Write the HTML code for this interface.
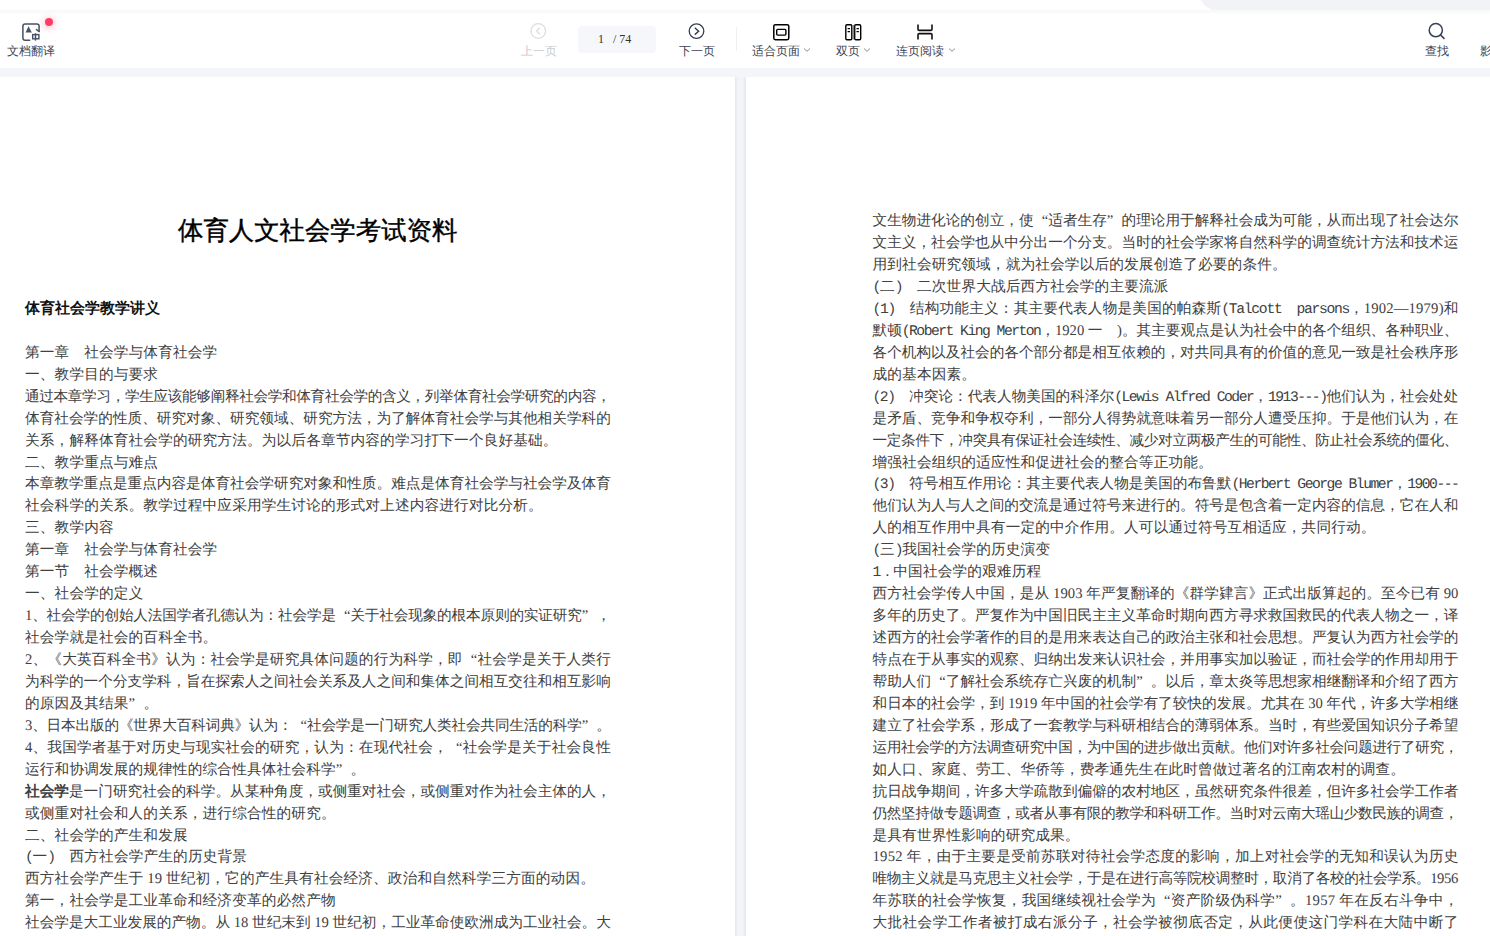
<!DOCTYPE html>
<html><head><meta charset="utf-8">
<style>
html,body{margin:0;padding:0;width:1490px;height:936px;overflow:hidden;background:#fff;}
body{position:relative;font-family:"Liberation Sans",sans-serif;}
.abs{position:absolute;}
#topcap{position:absolute;left:1200px;top:-20px;width:320px;height:30px;background:#f2f3f7;border-bottom-left-radius:16px;}
#tbshadow{position:absolute;left:0;top:10px;width:1490px;height:5px;background:linear-gradient(#f8f8f9,#fff);}
#band{position:absolute;left:0;top:68px;width:1490px;height:9px;background:#f4f5f9;}
.lbl{position:absolute;top:44px;font-size:12px;line-height:14px;color:#3b4252;white-space:nowrap;}
.pg{position:absolute;top:77px;height:859px;background:#fff;}
#gap{position:absolute;left:735px;top:77px;width:11px;height:859px;background:linear-gradient(90deg,#e6e7ec,#f3f4f7 30%,#f3f4f7 70%,#e6e7ec);}
.t{position:absolute;font-family:"Liberation Serif",serif;font-size:14.67px;line-height:22px;height:22px;color:#404040;white-space:nowrap;text-rendering:geometricPrecision;letter-spacing:0.14px;}
.t i{font-style:normal;padding-left:8.15px;}
.t u{text-decoration:none;padding-right:8.15px;}
.t b{font-family:"Liberation Sans",sans-serif;font-weight:bold;}
.t m{font-family:"Liberation Mono",monospace;letter-spacing:-1.33px;}
.t s{text-decoration:none;}
</style></head><body>
<div id="topcap"></div>
<div id="tbshadow"></div>
<div id="band"></div>
<!-- translate -->
<svg class="abs" style="left:20px;top:21px" width="22" height="22" viewBox="0 0 22 22">
 <path d="M9.7 19.2 H5.2 Q2.9 19.2 2.9 16.9 V5.1 Q2.9 2.9 5.2 2.9 H16.8 Q19.1 2.9 19.1 5.1 V10.5" fill="none" stroke="#475063" stroke-width="1.5" stroke-linecap="round"></path>
 <path d="M16.5 8.6 L19 10.5" fill="none" stroke="#475063" stroke-width="1.5" stroke-linecap="round"></path>
 <path d="M5.6 11.5 L8.5 5.2 L11.8 11.5 Z" fill="#475063"></path>
 <rect x="12.7" y="13.6" width="6.2" height="4.2" fill="none" stroke="#475063" stroke-width="1.4"></rect>
 <path d="M15.5 12.3 V19.6" stroke="#475063" stroke-width="1.5"></path>
</svg>
<div class="abs" style="left:45px;top:18px;width:8px;height:8px;border-radius:50%;background:#ff3d64;box-shadow:0 1px 6px 2px rgba(255,61,100,0.25)"></div>
<div class="lbl" style="left:7px">文档翻译</div>
<!-- prev -->
<svg class="abs" style="left:528px;top:21px" width="20" height="20" viewBox="0 0 20 20">
 <circle cx="10.3" cy="10" r="7.3" fill="none" stroke="#dcdde0" stroke-width="1.3"></circle>
 <path d="M11.8 6.8 L8.6 10 L11.8 13.2" fill="none" stroke="#dcdde0" stroke-width="1.3"></path>
</svg>
<div class="lbl" style="left:521px;color:#c9cacd">上一页</div>
<div class="abs" style="left:578px;top:26px;width:78px;height:27px;border-radius:4px;background:#f6f7fb"></div>
<div class="abs" style="left:598px;top:31px;font-family:'Liberation Serif',serif;font-size:12px;line-height:16px;color:#333">1</div>
<div class="abs" style="left:613px;top:31px;font-family:'Liberation Serif',serif;font-size:12px;line-height:16px;color:#333">/ 74</div>
<!-- next -->
<svg class="abs" style="left:686px;top:21px" width="20" height="20" viewBox="0 0 20 20">
 <circle cx="10.5" cy="10.1" r="7.3" fill="none" stroke="#363e52" stroke-width="1.3"></circle>
 <path d="M8.8 6.8 L12.6 10.3 L8.8 13.6" fill="none" stroke="#363e52" stroke-width="1.4"></path>
</svg>
<div class="lbl" style="left:679px">下一页</div>
<div class="abs" style="left:736px;top:27px;width:1px;height:24px;background:#eeeff2"></div>
<!-- fit page -->
<svg class="abs" style="left:771px;top:22px" width="20" height="20" viewBox="0 0 20 20">
 <rect x="2.8" y="2.7" width="15" height="15" rx="1.6" fill="none" stroke="#000" stroke-width="1.5"></rect>
 <rect x="5.7" y="7.4" width="9.2" height="5.7" rx="1" fill="none" stroke="#000" stroke-width="1.4"></rect>
</svg>
<div class="lbl" style="left:752px">适合页面</div>
<svg class="abs" style="left:803px;top:47px" width="8" height="6" viewBox="0 0 8 6"><path d="M1 1.5 L4 4.3 L7 1.5" fill="none" stroke="#8a8f99" stroke-width="1"></path></svg>
<!-- double -->
<svg class="abs" style="left:843px;top:22px" width="20" height="20" viewBox="0 0 20 20">
 <rect x="2.8" y="2.7" width="6" height="15" rx="1.2" fill="none" stroke="#000" stroke-width="1.4"></rect>
 <rect x="11.7" y="2.7" width="6" height="15" rx="1.2" fill="none" stroke="#000" stroke-width="1.4"></rect>
 <rect x="9.5" y="3" width="1.6" height="14.4" fill="#888"></rect>
 <path d="M4.6 6.6 H7 M4.6 9.6 H7 M13.5 6.6 H15.9 M13.5 9.6 H15.9" stroke="#000" stroke-width="1.1"></path>
</svg>
<div class="lbl" style="left:836px">双页</div>
<svg class="abs" style="left:863px;top:47px" width="8" height="6" viewBox="0 0 8 6"><path d="M1 1.5 L4 4.3 L7 1.5" fill="none" stroke="#8a8f99" stroke-width="1"></path></svg>
<!-- continuous -->
<svg class="abs" style="left:915px;top:22px" width="20" height="20" viewBox="0 0 20 20">
 <path d="M3 2.4 V7.2 Q3 8.4 4.2 8.4 H15.8 Q17 8.4 17 7.2 V2.4" fill="none" stroke="#111" stroke-width="1.6"></path>
 <path d="M3 17.6 V12.8 Q3 11.6 4.2 11.6 H15.8 Q17 11.6 17 12.8 V17.6" fill="none" stroke="#111" stroke-width="1.6"></path>
</svg>
<div class="lbl" style="left:896px">连页阅读</div>
<svg class="abs" style="left:948px;top:47px" width="8" height="6" viewBox="0 0 8 6"><path d="M1 1.5 L4 4.3 L7 1.5" fill="none" stroke="#8a8f99" stroke-width="1"></path></svg>
<!-- search -->
<svg class="abs" style="left:1426px;top:20px" width="20" height="20" viewBox="0 0 20 20">
 <circle cx="9.8" cy="10.2" r="6.6" fill="none" stroke="#384055" stroke-width="1.5"></circle>
 <path d="M14.6 15 L18 18.4" stroke="#384055" stroke-width="1.6" stroke-linecap="round"></path>
</svg>
<div class="lbl" style="left:1425px">查找</div>
<div class="lbl" style="left:1480px">影印</div>

<div class="pg" style="left:0;width:735px"></div>
<div class="pg" style="left:746px;width:744px"></div>
<div id="gap"></div>
<div class="abs" style="left:178px;top:214px;font-family:'Liberation Sans',sans-serif;font-size:25.4px;line-height:34px;color:#000;white-space:nowrap;text-rendering:geometricPrecision;-webkit-text-stroke:0.4px #000">体育人文社会学考试资料</div>
<div class="abs" style="left:25px;top:297px;font-family:'Liberation Sans',sans-serif;font-weight:bold;font-size:14.67px;line-height:22px;color:#111;white-space:nowrap">体育社会学教学讲义</div>
<!--TEXT-->
<div class="t" style="left:25px;top:341.84px">第一章　社会学与体育社会学</div>
<div class="t" style="left:25px;top:363.78px">一、教学目的与要求</div>
<div class="t j" style="left: 25px; top: 385.72px; letter-spacing: -0.376406px;">通过本章学习，学生应该能够阐释社会学和体育社会学的含义，列举体育社会学研究的内容，</div>
<div class="t j" style="left: 25px; top: 407.66px; letter-spacing: -0.0102404px;">体育社会学的性质、研究对象、研究领域、研究方法，为了解体育社会学与其他相关学科的</div>
<div class="t" style="left:25px;top:429.60px">关系，解释体育社会学的研究方法。为以后各章节内容的学习打下一个良好基础。</div>
<div class="t" style="left:25px;top:451.54px">二、教学重点与难点</div>
<div class="t j" style="left: 25px; top: 473.48px; letter-spacing: -0.0102404px;">本章教学重点是重点内容是体育社会学研究对象和性质。难点是体育社会学与社会学及体育</div>
<div class="t" style="left:25px;top:495.42px">社会科学的关系。教学过程中应采用学生讨论的形式对上述内容进行对比分析。</div>
<div class="t" style="left:25px;top:517.36px">三、教学内容</div>
<div class="t" style="left:25px;top:539.30px">第一章　社会学与体育社会学</div>
<div class="t" style="left:25px;top:561.24px">第一节　社会学概述</div>
<div class="t" style="left:25px;top:583.18px">一、社会学的定义</div>
<div class="t j" style="left: 25px; top: 605.12px; letter-spacing: -0.193594px;">1、社会学的创始人法国学者孔德认为：社会学是<i>“</i>关于社会现象的根本原则的实证研究<u>”</u>，</div>
<div class="t" style="left:25px;top:627.06px">社会学就是社会的百科全书。</div>
<div class="t j" style="left: 25px; top: 649px; letter-spacing: 0.17766px;">2、《大英百科全书》认为：社会学是研究具体问题的行为科学，即<i>“</i>社会学是关于人类行</div>
<div class="t j" style="left: 25px; top: 670.94px; letter-spacing: -0.0102404px;">为科学的一个分支学科，旨在探索人之间社会关系及人之间和集体之间相互交往和相互影响</div>
<div class="t" style="left:25px;top:692.88px">的原因及其结果<u>”</u>。</div>
<div class="t j" style="left: 25px; top: 714.82px; letter-spacing: -0.193594px;">3、日本出版的《世界大百科词典》认为：<i>“</i>社会学是一门研究人类社会共同生活的科学<u>”</u>。</div>
<div class="t j" style="left: 25px; top: 736.76px; letter-spacing: 0.17766px;">4、我国学者基于对历史与现实社会的研究，认为：在现代社会，<i>“</i>社会学是关于社会良性</div>
<div class="t" style="left:25px;top:758.70px">运行和协调发展的规律性的综合性具体社会科学<u>”</u>。</div>
<div class="t j" style="left: 25px; top: 780.64px; letter-spacing: -0.0102404px;"><b>社会学</b>是一门研究社会的科学。从某种角度，或侧重对社会，或侧重对作为社会主体的人，</div>
<div class="t" style="left:25px;top:802.58px">或侧重对社会和人的关系，进行综合性的研究。</div>
<div class="t" style="left:25px;top:824.52px">二、社会学的产生和发展</div>
<div class="t" style="left:25px;top:846.46px"><m>(</m>一<m>)</m>　西方社会学产生的历史背景</div>
<div class="t" style="left:25px;top:868.40px">西方社会学产生于<s> 19 </s>世纪初，它的产生具有社会经济、政治和自然科学三方面的动因。</div>
<div class="t" style="left:25px;top:890.34px">第一，社会学是工业革命和经济变革的必然产物</div>
<div class="t j" style="left: 25px; top: 912.28px; letter-spacing: -0.00950284px;">社会学是大工业发展的产物。从<s> 18 </s>世纪末到<s> 19 </s>世纪初，工业革命使欧洲成为工业社会。大</div>
<div class="t j" style="left: 872.5px; top: 210.2px; letter-spacing: -0.010641px;">文生物进化论的创立，使<i>“</i>适者生存<u>”</u>的理论用于解释社会成为可能，从而出现了社会达尔</div>
<div class="t j" style="left: 872.5px; top: 232.14px; letter-spacing: -0.0102404px;">文主义，社会学也从中分出一个分支。当时的社会学家将自然科学的调查统计方法和技术运</div>
<div class="t" style="left:872.5px;top:254.08px">用到社会研究领域，就为社会学以后的发展创造了必要的条件。</div>
<div class="t" style="left:872.5px;top:276.02px"><m>(</m>二<m>)</m>　二次世界大战后西方社会学的主要流派</div>
<div class="t j" style="left: 872.5px; top: 297.96px; letter-spacing: 0.177441px;"><m style="letter-spacing: -1.29256px;">(1)</m>　结构功能主义：其主要代表人物是美国的帕森斯<m style="letter-spacing: -1.29256px;">(Talcott&nbsp;&nbsp;parsons</m>，<s>1902—1979)</s>和</div>
<div class="t j" style="left: 872.5px; top: 319.9px; letter-spacing: -0.0306731px;">默顿<m style="letter-spacing: -1.50067px;">(Robert King Merton</m>，<s>1920 </s>一　<s>)</s>。其主要观点是认为社会中的各个组织、各种职业、</div>
<div class="t j" style="left: 872.5px; top: 341.84px; letter-spacing: -0.0102404px;">各个机构以及社会的各个部分都是相互依赖的，对共同具有的价值的意见一致是社会秩序形</div>
<div class="t" style="left:872.5px;top:363.78px">成的基本因素。</div>
<div class="t j" style="left: 872.5px; top: 385.72px; letter-spacing: -0.00641204px;"><m style="letter-spacing: -1.47641px;">(2)</m>　冲突论：代表人物美国的科泽尔<m style="letter-spacing: -1.47641px;">(Lewis Alfred Coder</m>，<m style="letter-spacing: -1.47641px;">1913---)</m>他们认为，社会处处</div>
<div class="t j" style="left: 872.5px; top: 407.66px; letter-spacing: -0.0102404px;">是矛盾、竞争和争权夺利，一部分人得势就意味着另一部分人遭受压抑。于是他们认为，在</div>
<div class="t j" style="left: 872.5px; top: 429.6px; letter-spacing: -0.376406px;">一定条件下，冲突具有保证社会连续性、减少对立两极产生的可能性、防止社会系统的僵化、</div>
<div class="t" style="left:872.5px;top:451.54px">增强社会组织的适应性和促进社会的整合等正功能。</div>
<div class="t j" style="left: 872.5px; top: 473.48px; letter-spacing: -0.00602273px;"><m style="letter-spacing: -1.47602px;">(3)</m>　符号相互作用论：其主要代表人物是美国的布鲁默<m style="letter-spacing: -1.47602px;">(Herbert George Blumer</m>，<m style="letter-spacing: -1.47602px;">1900---</m></div>
<div class="t j" style="left: 872.5px; top: 495.42px; letter-spacing: -0.0102404px;">他们认为人与人之间的交流是通过符号来进行的。符号是包含着一定内容的信息，它在人和</div>
<div class="t" style="left:872.5px;top:517.36px">人的相互作用中具有一定的中介作用。人可以通过符号互相适应，共同行动。</div>
<div class="t" style="left:872.5px;top:539.30px"><m>(</m>三<m>)</m>我国社会学的历史演变</div>
<div class="t" style="left:872.5px;top:561.24px"><m>1．</m>中国社会学的艰难历程</div>
<div class="t j" style="left: 872.5px; top: 583.18px; letter-spacing: 0.0735938px;">西方社会学传人中国，是从<s> 1903 </s>年严复翻译的《群学肄言》正式出版算起的。至今已有<s> 90</s></div>
<div class="t j" style="left: 872.5px; top: 605.12px; letter-spacing: -0.0102404px;">多年的历史了。严复作为中国旧民主主义革命时期向西方寻求救国救民的代表人物之一，译</div>
<div class="t j" style="left: 872.5px; top: 627.06px; letter-spacing: -0.0102404px;">述西方的社会学著作的目的是用来表达自己的政治主张和社会思想。严复认为西方社会学的</div>
<div class="t j" style="left: 872.5px; top: 649px; letter-spacing: -0.0102404px;">特点在于从事实的观察、归纳出发来认识社会，并用事实加以验证，而社会学的作用却用于</div>
<div class="t j" style="left: 872.5px; top: 670.94px; letter-spacing: -0.010641px;">帮助人们<i>“</i>了解社会系统存亡兴废的机制<u>”</u>。以后，章太炎等思想家相继翻译和介绍了西方</div>
<div class="t j" style="left: 872.5px; top: 692.88px; letter-spacing: -0.00930556px;">和日本的社会学，到<s> 1919 </s>年中国的社会学有了较快的发展。尤其在<s> 30 </s>年代，许多大学相继</div>
<div class="t j" style="left: 872.5px; top: 714.82px; letter-spacing: -0.0102404px;">建立了社会学系，形成了一套教学与科研相结合的薄弱体系。当时，有些爱国知识分子希望</div>
<div class="t j" style="left: 872.5px; top: 736.76px; letter-spacing: -0.376406px;">运用社会学的方法调查研究中国，为中国的进步做出贡献。他们对许多社会问题进行了研究，</div>
<div class="t" style="left:872.5px;top:758.70px">如人口、家庭、劳工、华侨等，费孝通先生在此时曾做过著名的江南农村的调查。</div>
<div class="t j" style="left: 872.5px; top: 780.64px; letter-spacing: -0.0102404px;">抗日战争期间，许多大学疏散到偏僻的农村地区，虽然研究条件很差，但许多社会学工作者</div>
<div class="t j" style="left: 872.5px; top: 802.58px; letter-spacing: -0.376406px;">仍然坚持做专题调查，或者从事有限的教学和科研工作。当时对云南大瑶山少数民族的调查，</div>
<div class="t" style="left:872.5px;top:824.52px">是具有世界性影响的研究成果。</div>
<div class="t j" style="left: 872.5px; top: 846.46px; letter-spacing: 0.25814px;"><s>1952 </s>年，由于主要是受前苏联对待社会学态度的影响，加上对社会学的无知和误认为历史</div>
<div class="t j" style="left: 872.5px; top: 868.4px; letter-spacing: -0.358512px;">唯物主义就是马克思主义社会学，于是在进行高等院校调整时，取消了各校的社会学系。<s>1956</s></div>
<div class="t j" style="left: 872.5px; top: 890.34px; letter-spacing: 0.257759px;">年苏联的社会学恢复，我国继续视社会学为<i>“</i>资产阶级伪科学<u>”</u>。<s>1957 </s>年在反右斗争中，</div>
<div class="t j" style="left: 872.5px; top: 912.28px; letter-spacing: 0.375197px;">大批社会学工作者被打成右派分子，社会学被彻底否定，从此便使这门学科在大陆中断了</div>
<!--/TEXT-->
<script>
(function(){
 var W=586;
 var els=document.querySelectorAll('.j');
 for(var i=0;i<els.length;i++){
  var el=els[i];
  var ms=el.querySelectorAll('m');
  el.style.letterSpacing='';
  for(var q=0;q<ms.length;q++){ms[q].style.letterSpacing='';}
  var w=el.getBoundingClientRect().width;
  var n=el.textContent.length;
  var ex=(W-w)/(n-1);
  el.style.letterSpacing=(0.14+ex)+'px';
  for(var q=0;q<ms.length;q++){ms[q].style.letterSpacing=(-1.33+ex)+'px';}
 }
})();
</script>

</body></html>
